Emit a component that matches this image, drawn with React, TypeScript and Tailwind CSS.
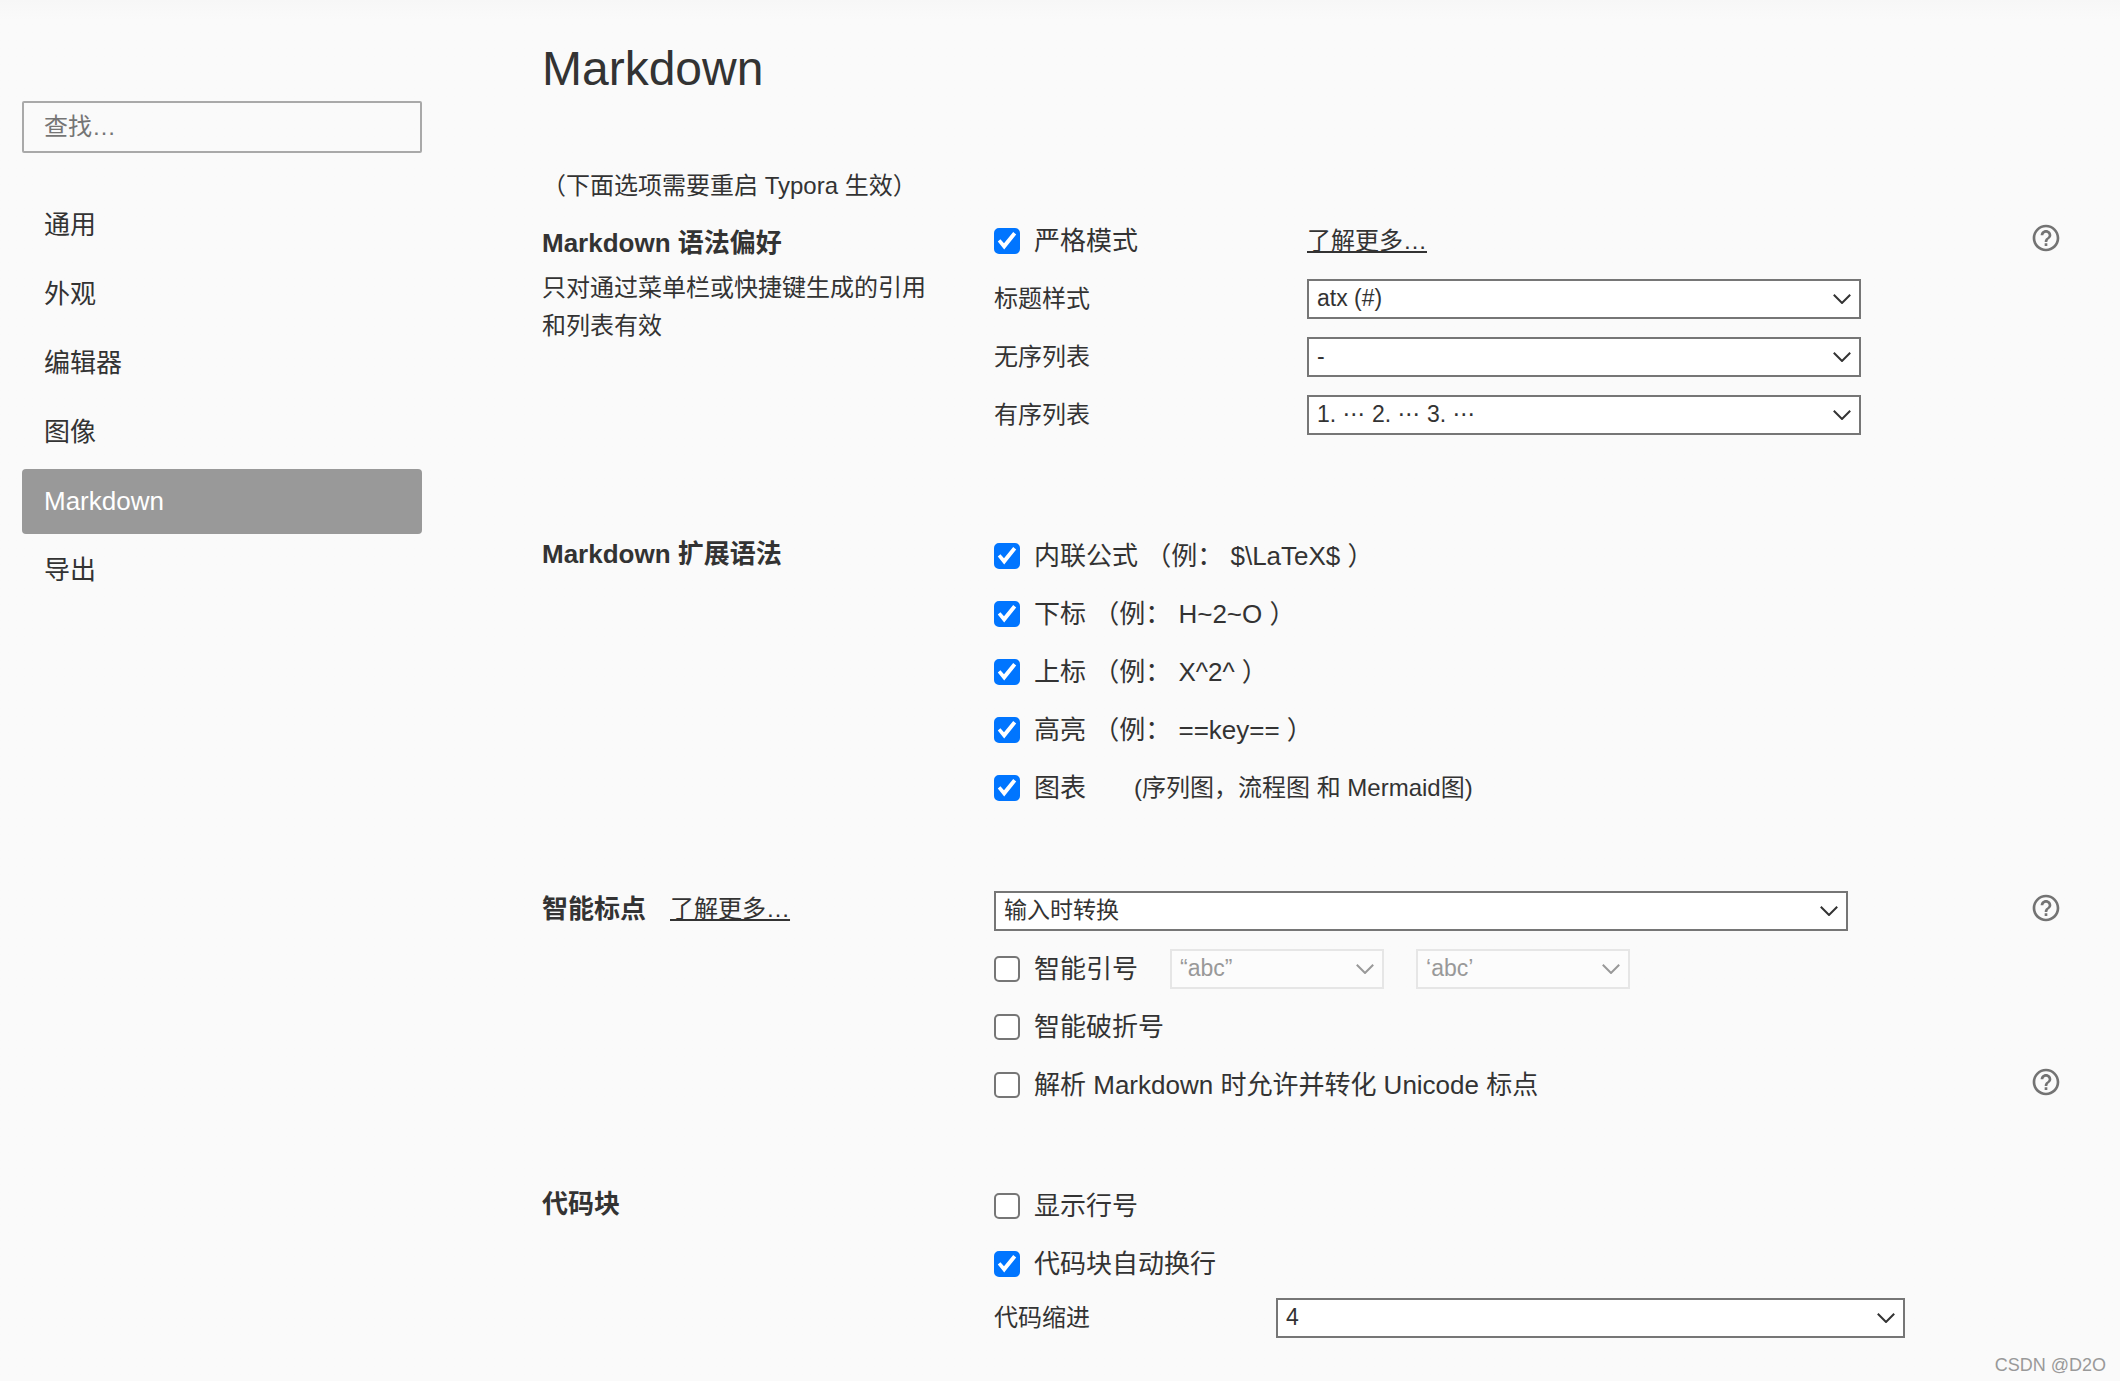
import React, { useId, useState } from 'react';
import { MdHelpOutline } from 'react-icons/md';
import clsx from 'clsx';

const navItems = ['通用', '外观', '编辑器', '图像', 'Markdown', '导出'];

const syntaxOptions = [
  { label: '内联公式 （例： $\\LaTeX$ ）' },
  { label: '下标 （例： H~2~O ）' },
  { label: '上标 （例： X^2^ ）' },
  { label: '高亮 （例： ==key== ）' },
  { label: '图表', note: '(序列图，流程图 和 Mermaid图)' },
];

interface SelectProps {
  id?: string;
  label?: string;
  options: string[];
  disabled?: boolean;
  className?: string;
}

const Select: React.FC<SelectProps> = ({ id, label, options, disabled, className }) => (
  <div className={clsx('relative w-full', className)}>
    <select
      id={id}
      aria-label={label}
      disabled={disabled}
      className="block h-10 w-full appearance-none border-2 border-[#767676] bg-white pr-10 pb-0.5 pl-2 font-['Liberation_Sans','DejaVu_Sans','Noto_Sans_CJK_SC',sans-serif] text-[23px] leading-8 disabled:border-[#e6e6e6] disabled:bg-[#fcfcfc] disabled:text-[#999]"
    >
      {options.map(option => (
        <option key={option}>{option}</option>
      ))}
    </select>
    <svg
      viewBox="0 0 18 10"
      className={clsx('pointer-events-none absolute top-[15px] right-[10px] h-[10px] w-[18px]', disabled ? 'text-[#999]' : 'text-[#333]')}
      fill="none"
      stroke="currentColor"
      strokeWidth="2"
    >
      <path d="M0.8 0.8 L9 9 L17.2 0.8" />
    </svg>
  </div>
);

interface CheckboxProps {
  label: string;
  defaultChecked?: boolean;
}

const Checkbox: React.FC<CheckboxProps> = ({ label, defaultChecked }) => (
  <label className="flex items-center gap-[14px] text-[26px] leading-9 whitespace-pre">
    <span className="grid size-[26px] shrink-0">
      <input
        type="checkbox"
        defaultChecked={defaultChecked}
        className="peer col-start-1 row-start-1 size-[26px] appearance-none rounded-[5px] border-2 border-[#767676] bg-white checked:border-[#0075ff] checked:bg-[#0075ff]"
      />
      <svg viewBox="0 0 26 26" className="pointer-events-none invisible col-start-1 row-start-1 size-[26px] fill-white peer-checked:visible">
        <path d="M3.8 13.4 L6.4 11.2 L10 15.2 L19.2 4 L22.2 6.6 L10.2 21.4 Z" />
      </svg>
    </span>
    {label}
  </label>
);

interface RowProps {
  help?: boolean;
  className?: string;
  children: React.ReactNode;
}

const Row: React.FC<RowProps> = ({ help, className, children }) => (
  <div className={clsx('flex items-center', className ?? 'h-[58px]')}>
    <div className="flex flex-1 items-center">{children}</div>
    {help && (
      <button type="button" aria-label="帮助" className="mt-[10px] self-start text-[#737373]">
        <MdHelpOutline className="size-8" />
      </button>
    )}
  </div>
);

interface SelectRowProps {
  label: string;
  options: string[];
}

const SelectRow: React.FC<SelectRowProps> = ({ label, options }) => {
  const id = useId();
  return (
    <Row>
      <label htmlFor={id} className="w-[313px] shrink-0 text-2xl">{label}</label>
      <Select id={id} options={options} className="max-w-[554px]" />
    </Row>
  );
};

const MoreLink: React.FC = () => (
  <a href="#more" className="text-2xl underline decoration-2 underline-offset-2">了解更多…</a>
);

interface SectionProps {
  title: string;
  link?: boolean;
  description?: string;
  className?: string;
  children: React.ReactNode;
}

const Section: React.FC<SectionProps> = ({ title, link, description, className, children }) => (
  <section className={clsx('grid grid-cols-[452px_1fr]', className)}>
    <div className={clsx('pr-[60px]', description ? 'pt-[13px]' : 'pt-[9px]')}>
      <div className="flex items-center gap-6">
        <h2 className="text-[26px] leading-9 font-bold">{title}</h2>
        {link && <MoreLink />}
      </div>
      {description && <p className="mt-2 text-2xl leading-[38px]">{description}</p>}
    </div>
    <div>{children}</div>
  </section>
);

const Sidebar: React.FC = () => {
  const [active, setActive] = useState('Markdown');
  return (
    <aside className="w-[422px] shrink-0 pt-[101px] pl-[22px]">
      <input
        type="search"
        aria-label="查找"
        placeholder="查找…"
        className="h-[52px] w-full rounded-xs border-2 border-[#a9a9a9] px-5 text-2xl placeholder:text-[#757575]"
      />
      <nav className="mt-10 flex flex-col gap-1">
        {navItems.map(item => (
          <button
            key={item}
            type="button"
            onClick={() => setActive(item)}
            className={clsx('h-[65px] rounded-sm px-[22px] text-left text-[26px]', active === item && 'bg-[#999] text-white')}
          >
            {item}
          </button>
        ))}
      </nav>
    </aside>
  );
};

const App: React.FC = () => {
  const indentId = useId();
  return (
    <div className="relative flex min-h-screen bg-linear-to-b from-[#f7f7f7] to-[#fafafa] to-[20px] font-['Liberation_Sans','Noto_Sans_CJK_SC',sans-serif] text-[#333]">
      <Sidebar />
      <main className="flex-1 pt-[41px] pr-[58px] pb-9 pl-[120px]">
        <h1 className="text-5xl leading-14">Markdown</h1>
        <p className="mt-[71px] text-2xl leading-9">（下面选项需要重启 Typora 生效）</p>

        <Section title="Markdown 语法偏好" description="只对通过菜单栏或快捷键生成的引用和列表有效" className="mt-2">
          <Row help>
            <div className="w-[313px]">
              <Checkbox label="严格模式" defaultChecked />
            </div>
            <MoreLink />
          </Row>
          <SelectRow label="标题样式" options={['atx (#)', 'setext (===)']} />
          <SelectRow label="无序列表" options={['-', '*', '+']} />
          <SelectRow label="有序列表" options={['1. ⋯ 2. ⋯ 3. ⋯', '1) ⋯ 2) ⋯ 3) ⋯']} />
        </Section>

        <Section title="Markdown 扩展语法" className="mt-[83px]">
          {syntaxOptions.map(({ label, note }) => (
            <Row key={label}>
              <Checkbox label={label} defaultChecked />
              {note && <span className="ml-12 text-2xl">{note}</span>}
            </Row>
          ))}
        </Section>

        <Section title="智能标点" link className="mt-[65px]">
          <Row help>
            <Select label="智能标点" options={['输入时转换', '渲染时转换']} className="max-w-[854px]" />
          </Row>
          <Row>
            <Checkbox label="智能引号" />
            <Select label="双引号" options={['“abc”']} disabled className="ml-8 max-w-[214px]" />
            <Select label="单引号" options={['‘abc’']} disabled className="ml-8 max-w-[214px]" />
          </Row>
          <Row>
            <Checkbox label="智能破折号" />
          </Row>
          <Row help>
            <Checkbox label="解析 Markdown 时允许并转化 Unicode 标点" />
          </Row>
        </Section>

        <Section title="代码块" className="mt-[63px]">
          <Row>
            <Checkbox label="显示行号" />
          </Row>
          <Row>
            <Checkbox label="代码块自动换行" defaultChecked />
          </Row>
          <Row className="h-[50px]">
            <label htmlFor={indentId} className="w-[282px] shrink-0 text-2xl">代码缩进</label>
            <Select id={indentId} options={['4', '2', '8']} className="max-w-[629px]" />
          </Row>
        </Section>
      </main>
      <span className="absolute right-[14px] bottom-0.5 text-lg text-[#999]">CSDN @D2O</span>
    </div>
  );
};

export default App;
